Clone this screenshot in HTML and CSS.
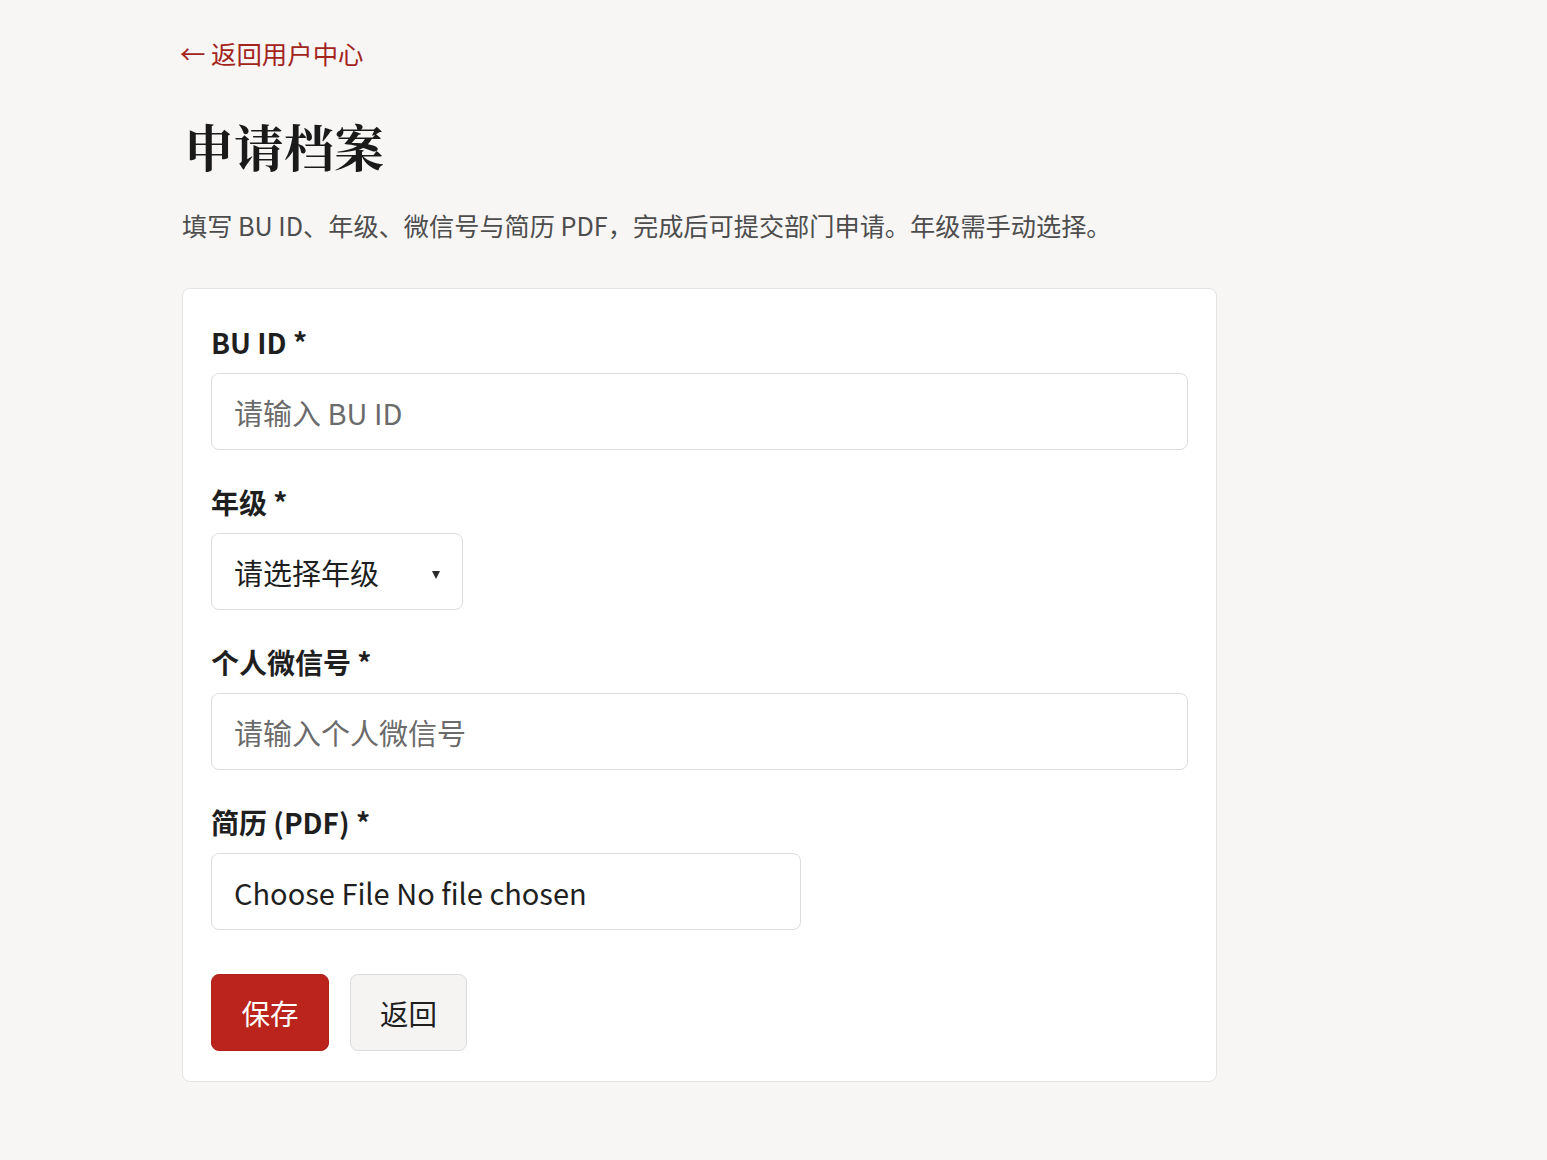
FILE: index.html
```html
<!DOCTYPE html>
<html lang="zh-CN">
<head>
<meta charset="utf-8">
<title>申请档案</title>
<link rel="stylesheet" href="styles.css">
</head>
<body>
<main class="page">
  <a class="back-link" href="#">← 返回用户中心</a>
  <h1 class="title">申请档案</h1>
  <p class="subtitle">填写 BU ID、年级、微信号与简历 PDF，完成后可提交部门申请。年级需手动选择。</p>
  <form class="card">
    <div class="field">
      <label class="label" for="buid">BU ID *</label>
      <input class="input" id="buid" type="text" placeholder="请输入 BU ID">
    </div>
    <div class="field">
      <label class="label" for="grade">年级 *</label>
      <div class="select-wrap">
        <select class="select" id="grade">
          <option>请选择年级</option>
        </select>
        <span class="caret"></span>
      </div>
    </div>
    <div class="field">
      <label class="label" for="wechat">个人微信号 *</label>
      <input class="input" id="wechat" type="text" placeholder="请输入个人微信号">
    </div>
    <div class="field">
      <label class="label" for="cv">简历 (PDF) *</label>
      <div class="file-box">Choose File No file chosen</div>
    </div>
    <div class="actions">
      <button class="btn btn-primary" type="button">保存</button>
      <button class="btn btn-secondary" type="button">返回</button>
    </div>
  </form>
</main>
</body>
</html>
```
FILE: styles.css
```css
* { box-sizing: border-box; }
html, body {
  margin: 0;
  padding: 0;
  background: #f7f6f5;
  font-family: "Noto Sans CJK SC", "Noto Sans", sans-serif;
  color: #1f1f1f;
}
.page {
  width: 1035px;
  margin-left: 182px;
  padding-top: 35px;
  display: flex;
  flex-direction: column;
}
.back-link {
  color: #a3241d;
  text-decoration: none;
  font-size: 25.4px;
  font-weight: 400;
  line-height: 36px;
  margin-left: -2px;
  align-self: flex-start;
}
.title {
  font-family: "Noto Serif CJK SC", "Noto Sans CJK SC", serif;
  font-size: 50px;
  line-height: 60px;
  font-weight: 700;
  margin: 44px 0 0 2px;
  color: #1a1a1a;
}
.subtitle {
  margin: 33px 0 0 0;
  font-size: 25.2px;
  line-height: 34px;
  color: #4d4d4d;
}
.card {
  margin-top: 46px;
  background: #ffffff;
  border: 1px solid #e6e4e2;
  border-radius: 8px;
  padding: 35px 28px 30px 28px;
  display: flex;
  flex-direction: column;
  gap: 34px;
}
.field {
  display: flex;
  flex-direction: column;
  align-items: flex-start;
  gap: 13px;
}
.label {
  font-size: 28px;
  line-height: 36px;
  font-weight: 700;
  color: #1f1f1f;
}
.input, .select, .file-box {
  height: 77px;
  border: 1px solid #dedcda;
  border-radius: 8px;
  background: #ffffff;
  font-family: inherit;
  font-size: 29px;
  padding: 0 22px;
  color: #1f1f1f;
}
.input {
  width: 100%;
  outline: none;
}
.input::placeholder { color: #6b6b6b; }
.select-wrap {
  position: relative;
  width: 252px;
}
.select {
  width: 100%;
  appearance: none;
  -webkit-appearance: none;
  color: #1f1f1f;
}
.caret {
  position: absolute;
  right: 23px;
  top: 38px;
  width: 0;
  height: 0;
  border-left: 4.5px solid transparent;
  border-right: 4.5px solid transparent;
  border-top: 8px solid #2a2a2a;
  pointer-events: none;
}
.file-box {
  width: 590px;
  display: flex;
  align-items: center;
  color: #1f1f1f;
}
.actions {
  display: flex;
  gap: 21px;
  margin-top: 10px;
}
.btn {
  height: 77px;
  border-radius: 8px;
  font-family: inherit;
  font-size: 28.5px;
  padding: 0;
  cursor: pointer;
}
.btn-primary {
  width: 118px;
  background: #bb241c;
  border: 1px solid #b0221a;
  color: #ffffff;
}
.btn-secondary {
  width: 117px;
  background: #f5f4f3;
  border: 1px solid #dedcda;
  color: #1f1f1f;
}
```
